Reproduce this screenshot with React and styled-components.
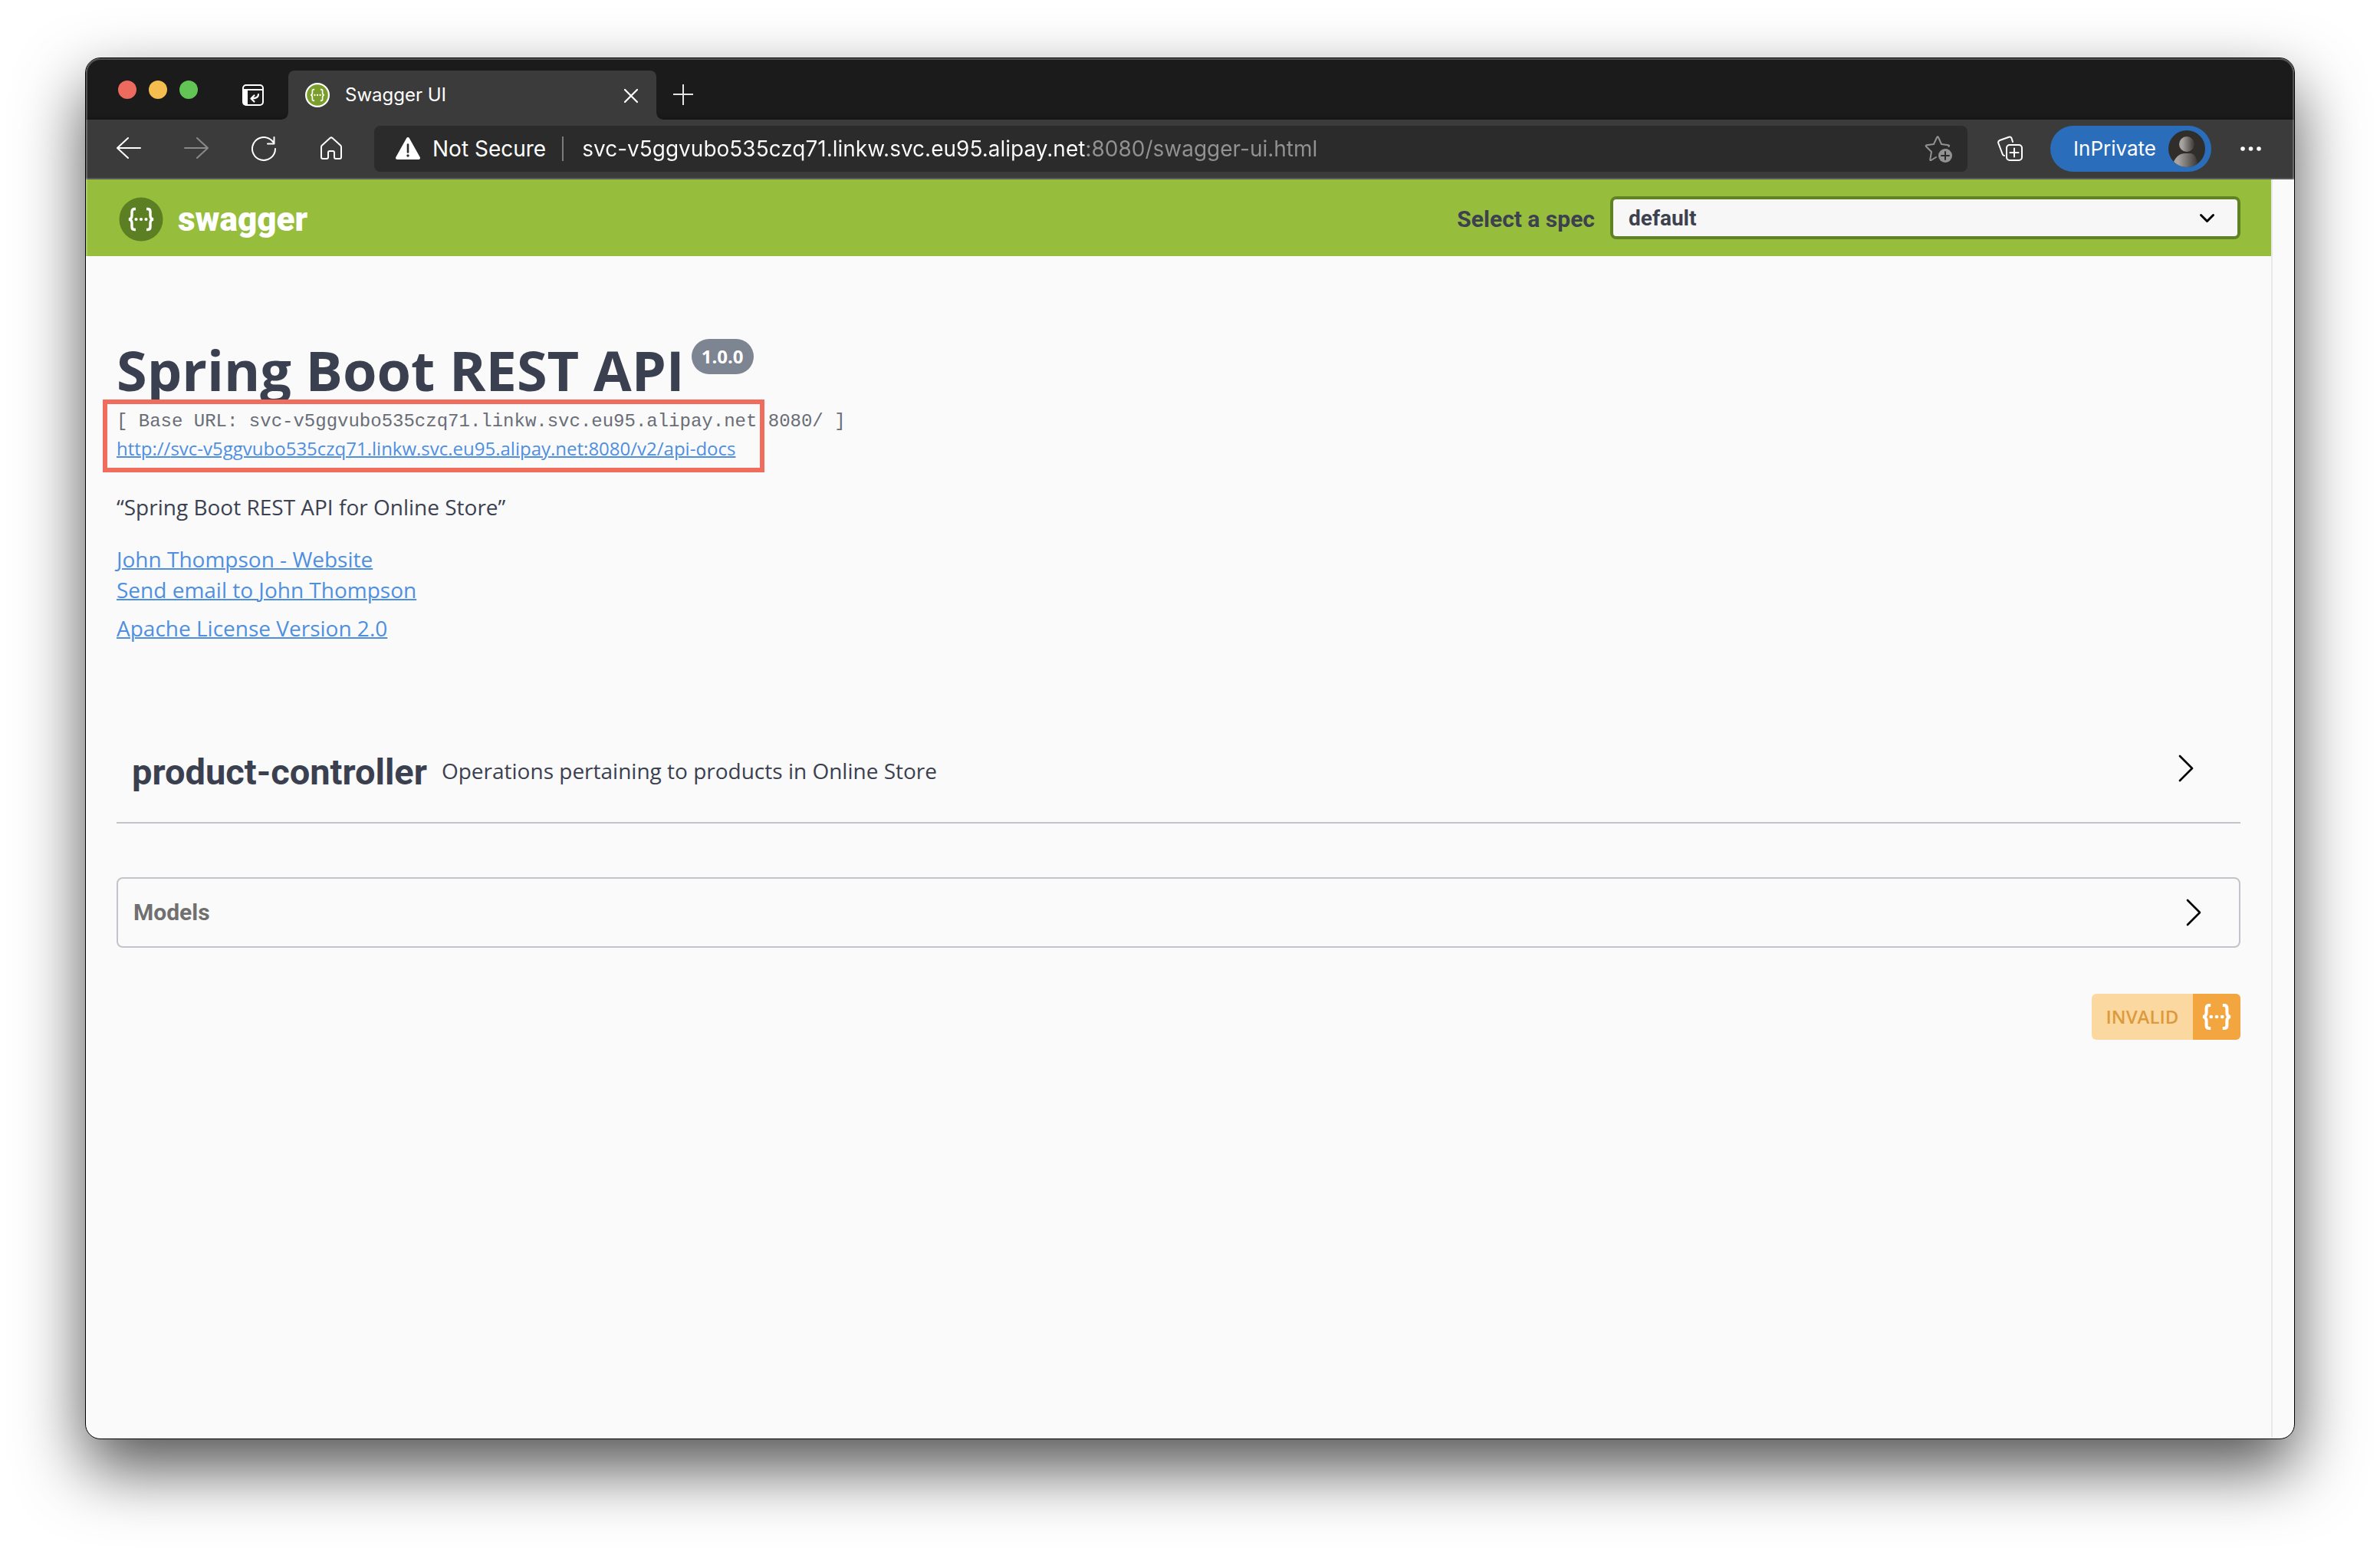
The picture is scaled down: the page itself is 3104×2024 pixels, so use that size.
import React from "react";
import styled, { createGlobalStyle } from "styled-components";

const ui = `Inter, "Liberation Sans", sans-serif`;
const heading = `Roboto, "Liberation Sans", sans-serif`;
const body = `"Open Sans", "Noto Sans", sans-serif`;
const mono = `"Liberation Mono", "DejaVu Sans Mono", monospace`;

const GlobalStyle = createGlobalStyle`
  *, *::before, *::after { box-sizing: border-box; }
  body { margin: 0; background: #fff; }
  button { border: 0; padding: 0; background: none; color: inherit; font: inherit; cursor: pointer; }
  svg { display: block; flex: none; }
  h1, h2, p { margin: 0; }
`;

/* ---------- browser window ---------- */

const Desktop = styled.div`
  display: flex;
  min-height: 100vh;
  padding: 75px 111px 147px;
`;

const BrowserWindow = styled.div`
  position: relative;
  display: flex;
  flex-direction: column;
  flex: 1;
  min-width: 0;
  overflow: hidden;
  border: 1px solid #000;
  border-radius: 20px;
  background: #fafafa;
  box-shadow: 0 38px 86px rgba(0, 0, 0, 0.68);

  &::after {
    content: "";
    position: absolute;
    inset: 0;
    border-radius: 19px;
    box-shadow: inset 0 0 0 2px rgba(255, 255, 255, 0.24);
    pointer-events: none;
  }
`;

const TabStrip = styled.div`
  display: flex;
  align-items: stretch;
  height: 80px;
  padding: 16px 0 0 42px;
  background: linear-gradient(#1b1b1b 90%, #161616);
`;

const WindowControls = styled.div`
  display: flex;
  gap: 16px;
  padding-top: 13px;
`;

const WindowControl = styled.button`
  width: 24px;
  height: 24px;
  border-radius: 50%;
  background: ${(p) => p.$color};
`;

const StripButton = styled.button`
  display: flex;
  align-items: center;
  justify-content: center;
  width: 48px;
  margin-left: 10px;
  color: #fff;
`;

const TabActions = styled(StripButton)`
  margin: 0 22px 0 48px;
`;

const Tab = styled.div`
  position: relative;
  display: flex;
  align-items: center;
  width: 480px;
  padding: 0 21px 0 22px;
  border-radius: 8px 8px 0 0;
  background: #3b3b3b;
  color: #fff;
  font: 400 24px/32px ${ui};

  &::before,
  &::after {
    content: "";
    position: absolute;
    bottom: 0;
    width: 8px;
    height: 8px;
  }
  &::before {
    left: -8px;
    background: radial-gradient(circle at 0 0, transparent 7px, #3b3b3b 8px);
  }
  &::after {
    right: -8px;
    background: radial-gradient(circle at 100% 0, transparent 7px, #3b3b3b 8px);
  }
`;

const TabTitle = styled.span`
  flex: 1;
  padding-left: 20px;
`;

const Toolbar = styled.div`
  display: flex;
  align-items: center;
  height: 78px;
  padding: 0 34px 0 32px;
  border-bottom: 2px solid #5a5a5a;
  background: #3b3b3b;
  color: #fff;
`;

const NavButtons = styled.div`
  display: flex;
  gap: 40px;
  margin-right: 32px;
`;

const NavButton = styled.button`
  display: flex;
  align-items: center;
  justify-content: center;
  width: 48px;
  height: 48px;
  opacity: ${(p) => (p.disabled ? 0.4 : 1)};
`;

const AddressBar = styled.div`
  display: flex;
  align-items: center;
  flex: 1;
  min-width: 0;
  height: 60px;
  padding: 0 18px 0 26px;
  border-radius: 8px;
  background: #2b2b2b;
  font: 400 28px/36px ${ui};
`;

const Security = styled.label`
  display: flex;
  align-items: center;
  gap: 14px;
  padding-right: 21px;
  white-space: nowrap;
`;

const Divider = styled.span`
  width: 2px;
  height: 32px;
  margin-right: 24px;
  background: #7b7b7b;
`;

/* the host part is bright, the port and path after it are dimmed */
const AddressInput = styled.input`
  flex: 1;
  min-width: 0;
  height: 44px;
  border: 0;
  padding: 0;
  outline: 0;
  font: inherit;
  color: #fff;
  background: linear-gradient(90deg, #fff ${(p) => p.$host}px, #929292 ${(p) => p.$host}px);
  background-clip: text;
  -webkit-background-clip: text;
  -webkit-text-fill-color: transparent;
`;

const Profile = styled.button`
  display: flex;
  align-items: center;
  gap: 16px;
  height: 60px;
  margin: 0 26px 0 28px;
  padding: 0 8px 0 30px;
  border-radius: 30px;
  background: #2a6dba;
  font: 400 26px/36px ${ui};
`;

const Collections = styled(NavButton)`
  margin-left: 32px;
`;

/* ---------- page ---------- */

const Viewport = styled.div`
  display: flex;
  flex: 1;
`;

const Page = styled.div`
  flex: 1;
  min-width: 0;
  color: #3b4151;
  font-family: ${body};
`;

const ScrollTrack = styled.div`
  width: 30px;
  border-left: 2px solid #e8e8e8;
`;

const Topbar = styled.header`
  display: flex;
  align-items: center;
  justify-content: space-between;
  height: 100px;
  padding: 0 40px 0 43px;
  background: #96be3c;
`;

const Brand = styled.a`
  display: flex;
  align-items: center;
  gap: 19px;
  padding-top: 3px;
  color: #fff;
  font: 900 44px/56px ${heading};
  text-decoration: none;
`;

const SpecPicker = styled.div`
  display: flex;
  align-items: center;
  gap: 20px;
  color: #3d414f;
`;

const SpecLabel = styled.label`
  padding-top: 3px;
  font: 700 30px/40px ${heading};
`;

const SelectBox = styled.div`
  position: relative;
  width: 822px;

  svg {
    position: absolute;
    right: 31px;
    top: 16px;
    pointer-events: none;
  }
`;

const Select = styled.select`
  appearance: none;
  display: block;
  width: 100%;
  height: 56px;
  padding: 2px 80px 0 20px;
  border: 4px solid #5f8324;
  border-radius: 8px;
  background: #f7f7f7;
  color: #3d414f;
  font: 700 28px/36px ${heading};
`;

const Content = styled.main`
  padding: 108px 40px 0;
`;

const TitleRow = styled.div`
  display: flex;
  align-items: flex-start;
  gap: 9px;
`;

const Title = styled.h1`
  padding-top: 4px;
  font: 700 72px/72px ${body};
  color: #3b4050;
`;

const Version = styled.span`
  padding: 0 13px;
  border-radius: 23px;
  background: #7d8492;
  color: #fff;
  font: 700 24px/46px ${body};
`;

const Locations = styled.div`
  position: relative;
  margin-top: 15px;
`;

const Highlight = styled.div`
  position: absolute;
  top: -12px;
  left: -18px;
  width: 863px;
  height: 95px;
  border: 6px solid #f06c5c;
  pointer-events: none;
`;

const BaseUrl = styled.p`
  font: 400 24px/34px ${mono};
  color: #696d77;
`;

const Link = styled.a`
  color: #4f8fe0;
  font-size: ${(p) => (p.$small ? 24 : 28)}px;
  line-height: ${(p) => (p.$small ? 36 : 40)}px;
  text-decoration: underline;
  text-decoration-thickness: 2px;
`;

const Row = styled.div`
  display: flex;
`;

const Description = styled.p`
  margin: 38px 0 28px;
  font-size: 28px;
  line-height: 40px;
`;

const License = styled(Row)`
  margin-top: 10px;
`;

const ControllerHeader = styled.button`
  display: flex;
  align-items: center;
  width: 100%;
  margin-top: 115px;
  padding: 20px 50px 34px 20px;
  border-bottom: 2px solid #c3c4c9;
  color: #3b4050;
  text-align: left;
`;

const ControllerName = styled.span`
  padding-top: 2px;
  font: 700 47px/62px ${heading};
`;

const ControllerNote = styled.span`
  flex: 1;
  padding: 0 0 2px 19px;
  font: 400 28px/40px ${body};
`;

const Raised = styled.span`
  padding-bottom: 8px;
`;

const ModelsHeader = styled.button`
  display: flex;
  align-items: center;
  justify-content: space-between;
  width: 100%;
  margin-top: 70px;
  padding: 24px 38px 24px 20px;
  border: 2px solid #c3c4c9;
  border-radius: 8px;
  color: #707070;
  font: 700 30px/40px ${heading};
`;

const Footer = styled.footer`
  display: flex;
  justify-content: flex-end;
  margin: 60px 0;
`;

const Validator = styled.a`
  display: flex;
  overflow: hidden;
  border-radius: 6px;
  background: #fbd8a0;
  color: #dd9a3c;
  font: 600 24px/60px ${body};
  text-decoration: none;
`;

const ValidatorState = styled.span`
  width: 132px;
  text-align: center;
`;

const ValidatorMark = styled.span`
  display: flex;
  align-items: center;
  justify-content: center;
  width: 62px;
  background: #f3a640;
`;

/* ---------- drawings ---------- */

const Braces = ({ w = 3.4 }) => (
  <g fill="none" stroke="#fff" strokeWidth={w}>
    <path d="M22 15.500h-1.500q-3.500 0-3.500 3.500v5q0 4.500-4 5 4 .5 4 5v5q0 3.500 3.500 3.500H22" />
    <path d="M36 15.500h1.500q3.500 0 3.500 3.500v5q0 4.500 4 5-4 .5-4 5v5q0 3.500-3.500 3.500H36" />
    <g fill="#fff" stroke="none">
      <circle cx="22.500" cy="29" r="2.100" />
      <circle cx="29" cy="29" r="2.100" />
      <circle cx="35.500" cy="29" r="2.100" />
    </g>
  </g>
);

const SwaggerMark = () => (
  <svg width="58" height="58" viewBox="0 0 58 58" aria-hidden="true">
    <circle cx="29" cy="29" r="28.500" fill="#5b7f22" />
    <Braces />
  </svg>
);

const Favicon = () => (
  <svg width="32" height="32" viewBox="0 0 58 58" aria-hidden="true">
    <circle cx="29" cy="29" r="27" fill="#7a9e2c" stroke="#fff" strokeWidth="4" />
    <Braces w={3} />
  </svg>
);

const Icon = ({ size = 32, sw = 2, children }) => (
  <svg width={size} height={size} viewBox={`0 0 ${size} ${size}`} fill="none" stroke="currentColor"
    strokeWidth={sw} strokeLinecap="round" strokeLinejoin="round" aria-hidden="true">
    {children}
  </svg>
);

const ChevronRight = () => (
  <Icon size={40} sw={2.6}>
    <path d="M11 4l16 16-16 16" stroke="#000" />
  </Icon>
);

const HOST = "svc-v5ggvubo535czq71.linkw.svc.eu95.alipay.net";

export default function App() {
  return (
    <>
      <GlobalStyle />
      <Desktop>
        <BrowserWindow>
          <TabStrip>
            <WindowControls>
              <WindowControl aria-label="Close window" $color="#ed6a5e" />
              <WindowControl aria-label="Minimize window" $color="#f5bd4f" />
              <WindowControl aria-label="Zoom window" $color="#61c454" />
            </WindowControls>
            <TabActions aria-label="Tab actions">
              <Icon>
                <rect x="3" y="3" width="26" height="26" rx="4" />
                <path d="M3 9h26" />
                <path d="M3 9h6v20H6q-3 0-3-3z" fill="currentColor" stroke="none" />
                <path d="M23 15q0 5.500-9 5.500M17.500 16.500l-4 4 4 4" strokeWidth="2.200" />
              </Icon>
            </TabActions>
            <Tab>
              <Favicon />
              <TabTitle>Swagger UI</TabTitle>
              <button aria-label="Close tab">
                <Icon size={24} sw={2.2}>
                  <path d="M4 5l16 16M20 5L4 21" />
                </Icon>
              </button>
            </Tab>
            <StripButton aria-label="New tab">
              <Icon sw={2}>
                <path d="M17 2v27M4 15h26" stroke="#e4e4e4" strokeLinecap="butt" />
              </Icon>
            </StripButton>
          </TabStrip>

          <Toolbar>
            <NavButtons>
              <NavButton aria-label="Back">
                <Icon><path d="M1 15h30M15 2L1 15l14 13" /></Icon>
              </NavButton>
              <NavButton aria-label="Forward" disabled>
                <Icon><path d="M31 15H1M17 2l14 13-14 13" /></Icon>
              </NavButton>
              <NavButton aria-label="Reload">
                <Icon><path d="M31 16a15 15 0 1 1-5-11.200L29.500 8.500M29.500 1v8.500H21" /></Icon>
              </NavButton>
              <NavButton aria-label="Home">
                <Icon>
                  <path d="M3 13.500q0-1 1-2L14.500 2q1.500-1.300 3 0L28 11.500q1 1 1 2V27q0 2-2 2h-5q-2 0-2-2v-6q0-2-2-2h-4q-2 0-2 2v6q0 2-2 2H5q-2 0-2-2z" />
                </Icon>
              </NavButton>
            </NavButtons>

            <AddressBar>
              <Security htmlFor="address">
                <svg width="36" height="32" viewBox="0 0 36 32" aria-hidden="true">
                  <path d="M18 3L32 28H4z" fill="#fff" stroke="#fff" strokeWidth="4" strokeLinejoin="round" />
                  <path d="M18 10.500v10" stroke="#2b2b2b" strokeWidth="2.600" strokeLinecap="round" />
                  <circle cx="18" cy="25" r="1.700" fill="#2b2b2b" />
                </svg>
                Not Secure
              </Security>
              <Divider />
              <AddressInput id="address" $host={659} defaultValue={`${HOST}:8080/swagger-ui.html`} spellCheck={false} />
              <button aria-label="Add to favorites">
                <Icon size={40} sw={2}>
                  <g stroke="#929292">
                    <path d="M17 31l-6.500 4q-1.500.5-1.200-1.200L11 24l-7-7q-1-1.500.8-1.800L14 14l4.200-9q.9-1.500 1.800 0L24 14l9 1.200q2 .3.5 1.800" />
                    <circle cx="29" cy="29" r="9" fill="#929292" stroke="none" />
                    <path d="M29 24v10M24 29h10" stroke="#2b2b2b" />
                  </g>
                </Icon>
              </button>
            </AddressBar>

            <Collections aria-label="Collections">
              <Icon size={34}>
                <path d="M9 26q-2-.5-2.500-2.500L1.200 9.500Q.7 7 3 6l12-4.300q2.500-.7 3.500 1.500L20 8" />
                <rect x="12" y="12" width="20" height="20" rx="4" />
                <path d="M22 16.500v11M16.500 22h11" />
              </Icon>
            </Collections>
            <Profile>
              InPrivate
              <svg width="48" height="48" viewBox="0 0 48 48" aria-hidden="true">
                <defs>
                  <linearGradient id="face" x1="0" x2="1">
                    <stop offset=".2" stopColor="#a8a5a1" />
                    <stop offset="1" stopColor="#3a3835" />
                  </linearGradient>
                  <clipPath id="disc"><circle cx="24" cy="24" r="24" /></clipPath>
                </defs>
                <g clipPath="url(#disc)">
                  <rect width="48" height="48" fill="#302e2b" />
                  <circle cx="24" cy="18" r="10" fill="url(#face)" />
                  <path d="M6 44c2-8 8-14 16-14h6c7 0 10 7 10 18H8z" fill="url(#face)" />
                </g>
              </svg>
            </Profile>
            <button aria-label="Settings and more">
              <svg width="48" height="32" viewBox="0 0 48 32" fill="#fff" aria-hidden="true">
                <circle cx="15" cy="16" r="2.800" />
                <circle cx="25.500" cy="16" r="2.800" />
                <circle cx="36" cy="16" r="2.800" />
              </svg>
            </button>
          </Toolbar>

          <Viewport>
            <Page>
              <Topbar>
                <Brand href="#">
                  <SwaggerMark />
                  swagger
                </Brand>
                <SpecPicker>
                  <SpecLabel htmlFor="spec">Select a spec</SpecLabel>
                  <SelectBox>
                    <Select id="spec" defaultValue="default">
                      <option value="default">default</option>
                    </Select>
                    <Icon size={24} sw={3}>
                      <path d="M3.500 8.500l8 8 8-8" stroke="#000" />
                    </Icon>
                  </SelectBox>
                </SpecPicker>
              </Topbar>

              <Content>
                <TitleRow>
                  <Title>Spring Boot REST API</Title>
                  <Version>1.0.0</Version>
                </TitleRow>
                <Locations>
                  <BaseUrl>[ Base URL: {HOST}:8080/ ]</BaseUrl>
                  <Row>
                    <Link $small href="#api-docs">http://{HOST}:8080/v2/api-docs</Link>
                  </Row>
                  <Highlight />
                </Locations>
                <Description>“Spring Boot REST API for Online Store”</Description>
                <Row><Link href="#website">John Thompson - Website</Link></Row>
                <Row><Link href="#email">Send email to John Thompson</Link></Row>
                <License><Link href="#license">Apache License Version 2.0</Link></License>

                <ControllerHeader aria-expanded="false">
                  <ControllerName>product-controller</ControllerName>
                  <ControllerNote>Operations pertaining to products in Online Store</ControllerNote>
                  <Raised><ChevronRight /></Raised>
                </ControllerHeader>

                <ModelsHeader aria-expanded="false">
                  Models
                  <ChevronRight />
                </ModelsHeader>

                <Footer>
                  <Validator href="#validator">
                    <ValidatorState>INVALID</ValidatorState>
                    <ValidatorMark>
                      <svg width="46" height="38" viewBox="9 12 40 34" aria-hidden="true">
                        <Braces w={3.6} />
                      </svg>
                    </ValidatorMark>
                  </Validator>
                </Footer>
              </Content>
            </Page>
            <ScrollTrack />
          </Viewport>
        </BrowserWindow>
      </Desktop>
    </>
  );
}
